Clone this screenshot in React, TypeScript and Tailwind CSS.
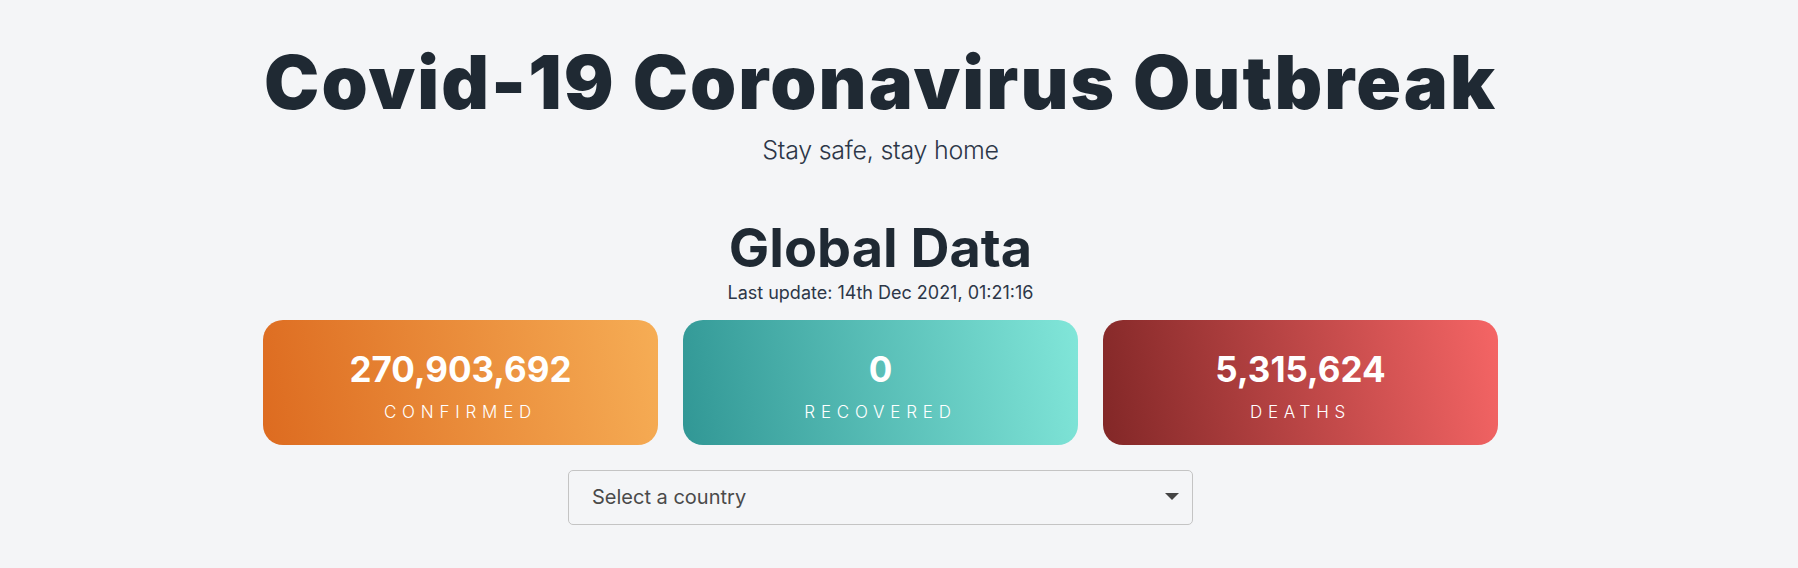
const stats = [
  {
    value: "270,903,692",
    label: "Confirmed",
    bg: "bg-linear-[80deg] from-[#dd6b20] to-[#f6ad55]",
  },
  {
    value: "0",
    label: "Recovered",
    bg: "bg-linear-[80deg] from-[#319795] to-[#81e6d9]",
  },
  {
    value: "5,315,624",
    label: "Deaths",
    bg: "bg-linear-[80deg] from-[#822727] to-[#f56565]",
  },
];

export default function App() {
  return (
    <div className="min-h-screen bg-[#f4f5f7] font-['Inter',sans-serif] text-[#1f2933]">
      <div className="ml-[263px] w-[1235px] flex flex-col items-center pt-[38px]">
        <h1 className="whitespace-nowrap text-[74px] leading-[88px] font-black tracking-[0.028em]">
          Covid-19 Coronavirus Outbreak
        </h1>
        <p className="text-[25px] font-light text-[#2d3748] mt-[6px] tracking-[-0.01em]">
          Stay safe, stay home
        </p>

        <h2 className="mt-[46px] text-[54px] leading-[64px] font-bold">
          Global Data
        </h2>
        <p className="text-[18px] text-[#2d3748] leading-[26px]">
          Last update: 14th Dec 2021, 01:21:16
        </p>

        <div className="mt-[14px] grid grid-cols-3 gap-[25px] w-full">
          {stats.map((s) => (
            <div
              key={s.label}
              className={`${s.bg} h-[125px] rounded-[20px] pt-[8px] flex flex-col items-center justify-center text-white`}
            >
              <div className="text-[35px] leading-[44px] font-bold">{s.value}</div>
              <div className="mt-[9px] text-[17px] uppercase tracking-[0.34em] font-light">
                {s.label}
              </div>
            </div>
          ))}
        </div>

        <div className="mt-[25px] w-[625px] h-[55px] border border-[#c4c4c4] rounded-[5px] flex items-center justify-between pl-[23px] pr-[13px] text-[20px] text-[#4a4a4a]">
          <span>Select a country</span>
          <svg width="14" height="8" viewBox="0 0 14 8">
            <path d="M0 0 H14 L7 7 Z" fill="#444" />
          </svg>
        </div>
      </div>
    </div>
  );
}
